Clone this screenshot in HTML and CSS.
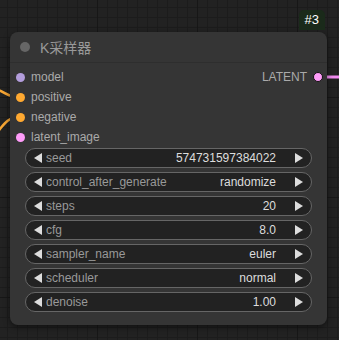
FILE: index.html
```html
<!DOCTYPE html>
<html lang="en">
<head>
  <meta charset="UTF-8">
  <title>KSampler</title>
  <link rel="stylesheet" href="styles.css">
</head>
<body>
  <svg class="wires" width="339" height="340" viewBox="0 0 339 340">
    <path d="M-10 86 C 2 90, 6 97, 20 97" stroke="#f7a634" stroke-width="2.5" fill="none"/>
    <path d="M-4 134 C 4 124, 8 117, 20 117" stroke="#f7a634" stroke-width="2.5" fill="none"/>
    <path d="M318 77 L 345 77" stroke="#f28cf0" stroke-width="3" fill="none"/>
  </svg>
  <div class="canvas">
    <div class="badge-row"><span class="badge">#3</span></div>
    <div class="node">
      <div class="title">
        <span class="title-dot"></span>
        <span class="title-text">K采样器</span>
      </div>
      <div class="slots">
        <div class="slot-row">
          <div class="slot"><span class="dot model"></span>model</div>
          <div class="slot out">LATENT<span class="dot latent"></span></div>
        </div>
        <div class="slot-row"><div class="slot"><span class="dot cond"></span>positive</div></div>
        <div class="slot-row"><div class="slot"><span class="dot cond"></span>negative</div></div>
        <div class="slot-row"><div class="slot"><span class="dot latent"></span>latent_image</div></div>
      </div>
      <div class="widgets">
        <div class="widget"><span class="arrow left"></span><span class="label">seed</span><span class="value">574731597384022</span><span class="arrow right"></span></div>
        <div class="widget"><span class="arrow left"></span><span class="label">control_after_generate</span><span class="value">randomize</span><span class="arrow right"></span></div>
        <div class="widget"><span class="arrow left"></span><span class="label">steps</span><span class="value">20</span><span class="arrow right"></span></div>
        <div class="widget"><span class="arrow left"></span><span class="label">cfg</span><span class="value">8.0</span><span class="arrow right"></span></div>
        <div class="widget"><span class="arrow left"></span><span class="label">sampler_name</span><span class="value">euler</span><span class="arrow right"></span></div>
        <div class="widget"><span class="arrow left"></span><span class="label">scheduler</span><span class="value">normal</span><span class="arrow right"></span></div>
        <div class="widget"><span class="arrow left"></span><span class="label">denoise</span><span class="value">1.00</span><span class="arrow right"></span></div>
      </div>
    </div>
  </div>
</body>
</html>
```
FILE: styles.css
```css
*{
  margin: 0;
  padding: 0;
  box-sizing: border-box;
}
body{
  width: 339px;
  height: 340px;
  overflow: hidden;
  position: relative;
  font-family: "Liberation Sans", Arial, "Noto Sans CJK SC", sans-serif;
  background-color: #222;
  background-image:
    linear-gradient(to right, #171717 1px, transparent 1px),
    linear-gradient(to bottom, #171717 1px, transparent 1px),
    linear-gradient(to right, #1c1c1c 1px, transparent 1px),
    linear-gradient(to bottom, #1c1c1c 1px, transparent 1px);
  background-size: 100px 100px, 100px 100px, 10px 10px, 10px 10px;
  background-position: -3px -3px, -3px -3px, -3px -3px, -3px -3px;
}
.wires{
  position: absolute;
  left: 0;
  top: 0;
}
.canvas{
  position: relative;
  padding: 10px 12px 0 10px;
}
.badge-row{
  display: flex;
  justify-content: flex-end;
  padding-right: 2px;
  margin-bottom: 2px;
}
.badge{
  background: #1a2a1a;
  color: #fff;
  font-size: 13px;
  height: 20px;
  line-height: 20px;
  padding: 0 6px;
  border-radius: 5px 5px 0 0;
}
.node{
  width: 317px;
  height: 293px;
  background: #353535;
  border-radius: 8px;
  box-shadow: 0 2px 6px rgba(0,0,0,0.5);
}
.title{
  height: 31px;
  display: flex;
  align-items: center;
  border-bottom: 1px solid #2e2e2e;
  padding-left: 10px;
}
.title-dot{
  width: 10px;
  height: 10px;
  border-radius: 50%;
  background: #666;
  margin-right: 10px;
}
.title-text{
  color: #999;
  font-size: 14px;
}
.slots{
  padding-top: 4px;
}
.slot-row{
  height: 20px;
  display: flex;
  justify-content: space-between;
  align-items: center;
}
.slot{
  display: flex;
  align-items: center;
  color: #aaa;
  font-size: 12px;
}
.slot .dot{
  width: 9px;
  height: 9px;
  border-radius: 50%;
  margin: 0 6px 0 6px;
}
.slot.out .dot{
  border: 1px solid #111;
  width: 10px;
  height: 10px;
  margin: 0 4px 0 6px;
}
.dot.model{
  background: #b39ddb;
}
.dot.cond{
  background: #ffa931;
}
.dot.latent{
  background: #ff9cf9;
}
.widgets{
  padding: 1px 15px 0 15px;
  display: flex;
  flex-direction: column;
  gap: 4px;
}
.widget{
  height: 20px;
  border: 1px solid #666;
  border-radius: 10px;
  background: #222;
  display: flex;
  align-items: center;
  font-size: 12px;
  padding: 0 8px;
}
.arrow{
  width: 0;
  height: 0;
  border-top: 5px solid transparent;
  border-bottom: 5px solid transparent;
}
.arrow.left{
  border-right: 8px solid #ddd;
  margin-right: 4px;
}
.arrow.right{
  border-left: 8px solid #ddd;
  margin-left: 19px;
}
.label{
  color: #999;
  flex: 1;
}
.value{
  color: #ddd;
}
```
